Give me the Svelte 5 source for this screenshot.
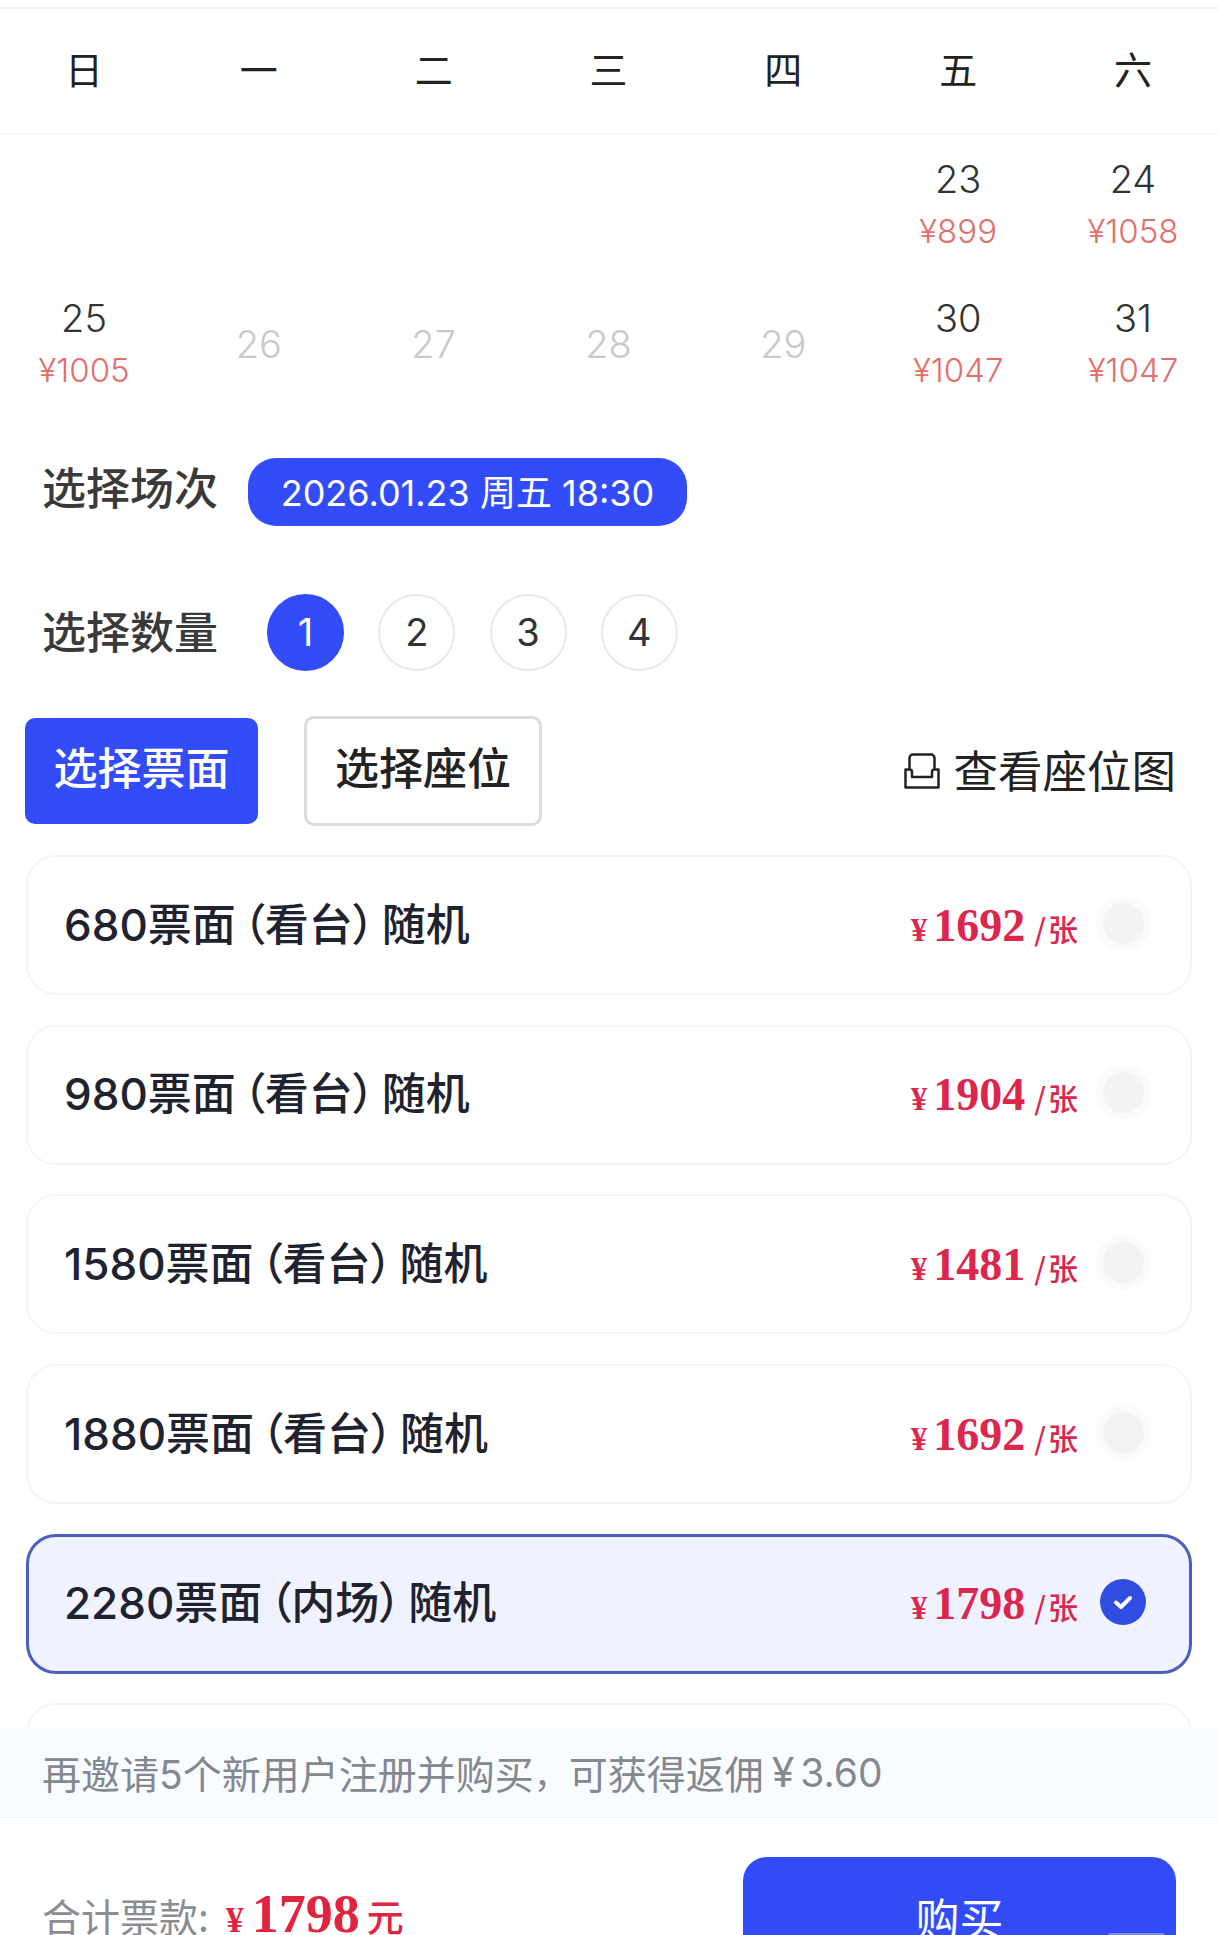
<script>
  const weekdays = ['日', '一', '二', '三', '四', '五', '六'];
  const days = [
    {}, {}, {}, {}, {},
    { d: 23, p: '¥899' }, { d: 24, p: '¥1058' },
    { d: 25, p: '¥1005' }, { d: 26 }, { d: 27 }, { d: 28 }, { d: 29 },
    { d: 30, p: '¥1047' }, { d: 31, p: '¥1047' }
  ];
  const tickets = [
    { face: '680票面', area: '看台', price: 1692 },
    { face: '980票面', area: '看台', price: 1904 },
    { face: '1580票面', area: '看台', price: 1481 },
    { face: '1880票面', area: '看台', price: 1692 },
    { face: '2280票面', area: '内场', price: 1798, on: true },
    {}
  ];
</script>

<div class="page">
  <div class="week">
    {#each weekdays as w}<div class="cell">{w}</div>{/each}
  </div>

  <div class="days">
    {#each days as c}
      <div class="cell day">
        {#if c.d}
          <div class="num" class:off={!c.p}>{c.d}</div>
          {#if c.p}<div class="fare">{c.p}</div>{/if}
        {/if}
      </div>
    {/each}
  </div>

  <div class="row session">
    <span class="label">选择场次</span>
    <span class="pill">2026.01.23 周五 18:30</span>
  </div>

  <div class="row qty">
    <span class="label">选择数量</span>
    <div class="circles">
      {#each [1, 2, 3, 4] as n}
        <span class="circle" class:active={n === 1}>{n}</span>
      {/each}
    </div>
  </div>

  <div class="tabs">
    <span class="tab active">选择票面</span>
    <span class="tab">选择座位</span>
    <span class="map">
      <svg width="36" height="36" viewBox="0 0 36 36" fill="none" stroke="#222" stroke-width="2.5" stroke-linejoin="round" stroke-linecap="round">
        <path d="M5.500 15V5a3.500 3.500 0 0 1 3.500-3.500h18a3.500 3.500 0 0 1 3.500 3.500v10" />
        <path d="M1.500 16.500h4a2.500 2.500 0 0 1 2.500 2.500v5h20v-5a2.500 2.500 0 0 1 2.500-2.500h4V34.500h-33z" />
      </svg>
      <span>查看座位图</span>
    </span>
  </div>

  <div class="list">
    {#each tickets as t}
      <div class="card" class:on={t.on}>
        {#if t.price}
          <span class="name">{t.face}<span class="pl">（</span>{t.area}<span class="pr">）</span>随机</span>
          <span class="price">
            <span class="yen">¥</span><span class="amt">{t.price}</span><span class="unit"><i>/</i>张</span>
          </span>
          {#if t.on}
            <span class="radio checked">
              <svg width="22" height="18" viewBox="0 0 22 18" fill="none" stroke="#fff" stroke-width="4" stroke-linecap="round" stroke-linejoin="round"><path d="M4 9.500l5 4.500 9-9" /></svg>
            </span>
          {:else}
            <span class="radio"><span class="dot"></span></span>
          {/if}
        {/if}
      </div>
    {/each}
  </div>

  <div class="notice">再邀请5个新用户注册并购买<span class="nc">，</span>可获得返佣<span class="ny">¥</span>3.60</div>

  <div class="foot">
    <div class="total">
      <span class="tlabel">合计票款:</span>
      <span class="tyen">¥</span><span class="tamt">1798</span><span class="tunit">元</span>
    </div>
    <div class="buy">购买<span class="bar"></span></div>
  </div>
</div>

<style>
  :global(html), :global(body) { margin: 0; background: #fff; overflow: hidden; }
  .page {
    width: 1218px;
    height: 1935px;
    overflow: hidden;
    display: flex;
    flex-direction: column;
    background: #fff;
    font-family: Inter, "Noto Sans CJK SC", sans-serif;
    color: #333;
  }
  .week {
    margin-top: 7px;
    box-sizing: border-box;
    height: 128px;
    flex: none;
    display: flex;
    justify-content: space-between;
    align-items: center;
    padding: 0 61px 7px 60px;
    border-top: 2px solid #f1f1f1;
    border-bottom: 2px solid #f6f6f6;
    font-family: "Noto Sans CJK SC", sans-serif;
    font-size: 38px;
    font-weight: 400;
    color: #222;
  }
  .cell { width: 48px; text-align: center; white-space: nowrap; display: flex; flex-direction: column; align-items: center; justify-content: center; }
  .days {
    flex: none;
    display: grid;
    grid-template-columns: repeat(7, 48px);
    justify-content: space-between;
    padding: 0 61px 0 60px;
    grid-auto-rows: 139px;
    height: 278px;
  }
  .day { height: 139px; }
  .num { font-size: 38px; font-weight: 300; line-height: 48px; color: #333; }
  .num.off { color: #c9c9c9; }
  .fare { font-size: 33px; font-weight: 300; line-height: 40px; margin: 8px 0 4px; color: #e36f6c; }
  .row { display: flex; align-items: center; padding-left: 42px; flex: none; }
  .label { font-family: "Noto Sans CJK SC", sans-serif; font-size: 44px; color: #3a3a3a; font-weight: 500; }
  .session { margin-top: 45px; height: 68px; }
  .session .label { margin-bottom: 12px; }
  .pill {
    box-sizing: border-box;
    margin-left: 30px;
    width: 439px;
    height: 68px;
    padding-bottom: 5px;
    border-radius: 28px;
    background: #334cfa;
    color: #fff;
    font-size: 36px;
    display: flex;
    align-items: center;
    justify-content: center;
    white-space: nowrap;
  }
  .qty { margin-top: 67px; height: 78px; }
  .qty .label { margin-bottom: 4px; }
  .circles { margin-left: 49px; display: flex; gap: 34.300px; }
  .circle {
    width: 77px;
    height: 77px;
    box-sizing: border-box;
    border-radius: 50%;
    border: 2px solid #e9e9e9;
    display: flex;
    align-items: center;
    justify-content: center;
    font-size: 38px;
    color: #333;
  }
  .circle.active { background: #334cfa; border-color: #334cfa; color: #fff; }
  .tabs { margin-top: 45px; height: 110px; flex: none; display: flex; align-items: center; padding: 0 42px 0 25px; }
  .tab {
    box-sizing: border-box;
    width: 238px;
    height: 110px;
    border: 3px solid #dcdcdc;
    border-radius: 10px;
    font-family: "Noto Sans CJK SC", sans-serif;
    font-size: 44px;
    font-weight: 500;
    color: #222;
    display: flex;
    align-items: center;
    justify-content: center;
    margin-left: 46px;
    padding-bottom: 10px;
  }
  .tab.active {
    width: 233px;
    height: 106px;
    margin-left: 0;
    background: #334cfa;
    border: none;
    color: #fff;
  }
  .map {
    margin-left: auto;
    display: flex;
    align-items: center;
    gap: 13px;
    font-family: "Noto Sans CJK SC", sans-serif;
    font-size: 44.500px;
    color: #222;
    font-weight: 400;
    padding-bottom: 6px;
  }
  .map svg { margin-top: 6px; }
  .list { margin-top: 29px; flex: 1 0 0; min-height: 0; overflow: hidden; padding: 0 26px; display: flex; flex-direction: column; gap: 29.700px; }
  .card {
    box-sizing: border-box;
    flex: none;
    height: 140px;
    border: 2px solid #f5f5f6;
    border-radius: 30px;
    display: flex;
    align-items: center;
    padding: 0 39px 0 36px;
  }
  .card.on { border: 3px solid #4a5fc0; background: #f0f3ff; padding: 0 38px 0 35px; }
  .name { font-size: 44px; color: #1f2330; white-space: nowrap; font-weight: 500; padding-bottom: 7px; }
  .pl, .pr { font-feature-settings: "palt"; }
  .pl { margin-left: 7px; }
  .pr { margin-right: 7px; }
  .price { margin-left: auto; display: flex; align-items: baseline; color: #dc264d; font-family: "Liberation Serif", serif; font-weight: 700; }
  .yen { font-size: 33px; margin-right: 6px; }
  .amt { font-size: 46px; }
  .unit { font-size: 30px; margin-left: 9px; font-weight: 500; font-family: "Noto Sans CJK SC", sans-serif; }
  .unit i { font-style: normal; margin-right: 2px; }
  .radio {
    width: 55px;
    height: 55px;
    margin-left: 18px;
    margin-top: -4px;
    border-radius: 50%;
    background: #fafafa;
    display: flex;
    align-items: center;
    justify-content: center;
    flex: none;
  }
  .dot { width: 41px; height: 41px; border-radius: 50%; background: #f3f3f5; }
  .radio.checked { width: 46px; height: 46px; margin-left: 22px; margin-right: 5px; background: #2f4de0; }
  .notice {
    flex: none;
    box-sizing: border-box;
    height: 91px;
    padding-left: 42px;
    display: flex;
    align-items: center;
    background: #f9fcff;
    border-bottom: 1px solid #f1f3f5;
    font-size: 39px;
    color: #84888f;
    white-space: nowrap;
  }
  .nc { font-size: 35px; }
  .ny { margin: 0 6px 0 8px; font-size: 41px; }
  .foot {
    flex: none;
    height: 117px;
    display: flex;
    align-items: flex-start;
    justify-content: space-between;
    padding: 39px 42px 0 42px;
    box-sizing: border-box;
  }
  .total { display: flex; align-items: baseline; white-space: nowrap; margin-top: 27px; line-height: 60px; }
  .tlabel { font-family: "Noto Sans CJK SC", sans-serif; font-size: 39px; color: #8a8d93; }
  .tyen { font-family: "Liberation Serif", serif; font-weight: 700; font-size: 36px; color: #e0233f; margin-left: 17px; margin-right: 8px; }
  .tamt { font-family: "Liberation Serif", serif; font-weight: 700; font-size: 54px; color: #e0233f; }
  .tunit { font-family: "Noto Sans CJK SC", sans-serif; font-size: 37px; font-weight: 500; color: #e0233f; margin-left: 7px; }
  .buy {
    position: relative;
    width: 433px;
    height: 140px;
    border-radius: 24px;
    background: #334cfa;
    color: #fff;
    font-family: "Noto Sans CJK SC", sans-serif;
    font-size: 44px;
    display: flex;
    justify-content: center;
    padding-top: 28px;
    box-sizing: border-box;
    line-height: 64px;
    flex: none;
  }
  .bar {
    position: absolute;
    left: 365px;
    top: 76px;
    width: 57px;
    height: 3px;
    border-radius: 3px 3px 0 0;
    background: #7f8fe6;
  }
</style>
